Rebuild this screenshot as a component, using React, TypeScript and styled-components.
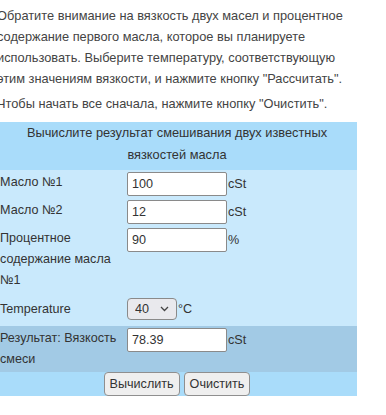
import styled, { createGlobalStyle } from 'styled-components'

const GlobalStyle = createGlobalStyle`
  body {
    margin: 0;
    background: #fff;
    font-family: "Liberation Sans", Arial, sans-serif;
    font-size: 12.6px;
    color: #444;
  }
`

const Page = styled.div`
  width: 360px;
  margin-left: -3px;
`

const Intro = styled.p<{ $last?: boolean }>`
  margin: ${(p) => (p.$last ? '4px 0 8px' : '5px 0 0')};
  font-size: 12.8px;
  line-height: 21px;
  color: #444;
`

const CalcTable = styled.table`
  width: 360px;
  border-collapse: collapse;
  color: #333;
`

const HeaderCell = styled.th`
  background: #a9dcfa;
  font-weight: normal;
  font-size: 12.8px;
  line-height: 22px;
  padding: 0 4px 4px;
  text-align: center;
`

const Row = styled.tr<{ $tone?: 'result' }>`
  background: ${(p) => (p.$tone === 'result' ? '#a2cae5' : '#c9e9fc')};
`

const LabelCell = styled.td`
  width: 124px;
  padding: 2px 3px;
  line-height: 21px;
  vertical-align: top;
`

const ValueCell = styled.td`
  padding: 2px 0;
  vertical-align: top;
`

const Field = styled.div`
  display: flex;
  align-items: center;
  height: 24px;
`

const TextInput = styled.input`
  box-sizing: border-box;
  width: 100px;
  height: 24px;
  padding: 0 4px;
  border: 1px solid #8a8a8a;
  border-radius: 2px;
  background: #fff;
  font: inherit;
  color: #333;
`

const Unit = styled.span`
  padding-left: 1px;
`

const SelectWrap = styled.span`
  position: relative;
  display: inline-block;
`

const Select = styled.select`
  appearance: none;
  box-sizing: border-box;
  width: 50px;
  height: 22px;
  padding: 0 0 0 7px;
  border: 1px solid #8a8a8a;
  border-radius: 4px;
  background: #e9e9ed;
  font: inherit;
  color: #333;
`

const Chevron = styled.svg`
  position: absolute;
  right: 8px;
  top: 8px;
  pointer-events: none;
`

const ButtonCell = styled.td`
  background: #a9dcfa;
  text-align: center;
  padding: 0;
  height: 24px;
`

const ActionButton = styled.button`
  height: 24px;
  margin: 0 2px;
  padding: 0 5px;
  border: 1px solid #8f8f8f;
  border-radius: 4px;
  background: #efefef;
  font: inherit;
  color: #333;
  vertical-align: top;
`

function App() {
  return (
    <Page>
      <GlobalStyle />
      <Intro>
        Обратите внимание на вязкость двух масел и процентное содержание
        первого масла, которое вы планируете использовать. Выберите
        температуру, соответствующую этим значениям вязкости, и нажмите
        кнопку "Рассчитать".
      </Intro>
      <Intro $last>Чтобы начать все сначала, нажмите кнопку "Очистить".</Intro>
      <CalcTable>
        <thead>
          <tr>
            <HeaderCell colSpan={2}>
              Вычислите результат смешивания двух известных вязкостей масла
            </HeaderCell>
          </tr>
        </thead>
        <tbody>
          <Row>
            <LabelCell>Масло №1</LabelCell>
            <ValueCell>
              <Field>
                <TextInput defaultValue="100" />
                <Unit>cSt</Unit>
              </Field>
            </ValueCell>
          </Row>
          <Row>
            <LabelCell>Масло №2</LabelCell>
            <ValueCell>
              <Field>
                <TextInput defaultValue="12" />
                <Unit>cSt</Unit>
              </Field>
            </ValueCell>
          </Row>
          <Row>
            <LabelCell>Процентное содержание масла №1</LabelCell>
            <ValueCell>
              <Field>
                <TextInput defaultValue="90" />
                <Unit>%</Unit>
              </Field>
            </ValueCell>
          </Row>
          <Row>
            <LabelCell style={{ paddingTop: 6, paddingBottom: 6 }}>Temperature</LabelCell>
            <ValueCell style={{ paddingTop: 4 }}>
              <Field>
                <SelectWrap>
                  <Select defaultValue="40">
                    <option value="40">40</option>
                    <option value="100">100</option>
                  </Select>
                  <Chevron width="9" height="6" viewBox="0 0 9 6">
                    <path d="M1 1l3.5 3.5L8 1" fill="none" stroke="#444" strokeWidth="1.3" />
                  </Chevron>
                </SelectWrap>
                <Unit>°C</Unit>
              </Field>
            </ValueCell>
          </Row>
          <Row $tone="result">
            <LabelCell>Результат: Вязкость смеси</LabelCell>
            <ValueCell>
              <Field>
                <TextInput defaultValue="78.39" />
                <Unit>cSt</Unit>
              </Field>
            </ValueCell>
          </Row>
          <tr>
            <ButtonCell colSpan={2}>
              <ActionButton>Вычислить</ActionButton>
              <ActionButton>Очистить</ActionButton>
            </ButtonCell>
          </tr>
        </tbody>
      </CalcTable>
    </Page>
  )
}

export default App
